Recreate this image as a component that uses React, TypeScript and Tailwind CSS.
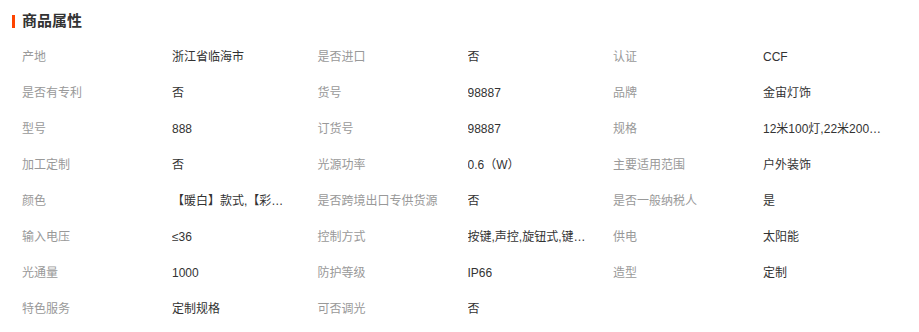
const rows: [string, string][][] = [
  [["产地", "浙江省临海市"], ["是否进口", "否"], ["认证", "CCF"]],
  [["是否有专利", "否"], ["货号", "98887"], ["品牌", "金宙灯饰"]],
  [["型号", "888"], ["订货号", "98887"], ["规格", "12米100灯,22米200灯,32米300灯"]],
  [["加工定制", "否"], ["光源功率", "0.6（W）"], ["主要适用范围", "户外装饰"]],
  [["颜色", "【暖白】款式,【彩色】款式"], ["是否跨境出口专供货源", "否"], ["是否一般纳税人", "是"]],
  [["输入电压", "≤36"], ["控制方式", "按键,声控,旋钮式,键盘控制"], ["供电", "太阳能"]],
  [["光通量", "1000"], ["防护等级", "IP66"], ["造型", "定制"]],
  [["特色服务", "定制规格"], ["可否调光", "否"]],
]

export default function App() {
  return (
    <div className="w-[919px] h-[332px] bg-white font-['Liberation_Sans','Noto_Sans_CJK_SC',sans-serif] text-[12px]">
      <div className="h-[39px] flex items-start pt-[11px] pl-[12px]">
        <div className="flex items-center h-[20px]">
          <span className="w-[3px] h-[13px] bg-[#ff4400] mr-[7px]" />
          <span className="text-[15px] font-bold text-[#333]">商品属性</span>
        </div>
      </div>
      <div className="pl-[22px]">
        {rows.map((row, i) => (
          <div key={i} className="flex h-[36px] items-center">
            {row.map(([label, value], j) => (
              <div key={j} className="flex w-[295.5px] shrink-0">
                <span className="w-[150px] shrink-0 text-[#999] whitespace-nowrap">{label}</span>
                <span className="max-w-[122px] truncate text-[#333]">{value}</span>
              </div>
            ))}
          </div>
        ))}
      </div>
    </div>
  )
}
